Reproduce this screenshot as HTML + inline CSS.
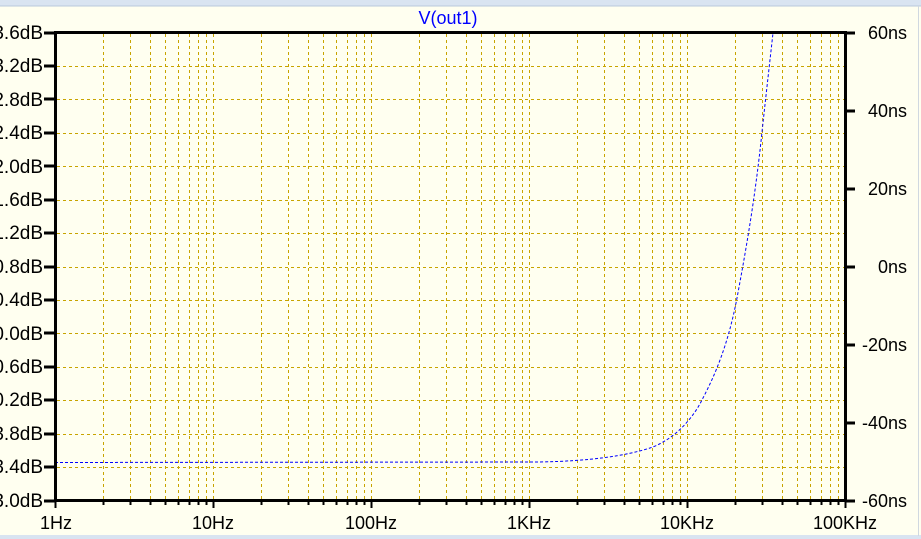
<!DOCTYPE html>
<html><head><meta charset="utf-8"><style>
body{margin:0;width:921px;height:539px;overflow:hidden;background:#fffff0;font-family:"Liberation Sans",Arial,sans-serif}
svg{position:absolute;left:0;top:0}
</style></head><body>
<svg id="s" width="921" height="539" xmlns="http://www.w3.org/2000/svg">
<rect x="0" y="0" width="921" height="6" fill="#d9e4f1"/>
<line x1="0" y1="6" x2="921" y2="6" stroke="#b9c9dc"/>
<rect x="0" y="535" width="921" height="4" fill="#d9e4f1"/>
<line x1="918.5" y1="6" x2="918.5" y2="536" stroke="#d0d8e0"/>
<g id="grid" stroke="#c8a400" stroke-width="1" stroke-dasharray="3,3"></g>
<path fill="none" stroke="#0000ff" stroke-width="1" stroke-dasharray="3,2" d="M55,462.5 L540,462 C590,461 625,456 650,448 C668,442 690,425 703,398 C715,375 728,345 737,298 C745,255 755,200 762,132 C766,95 770,60 773,33"/>
<g id="ax" stroke="#000"></g>
<rect x="55" y="31" width="790" height="3" fill="#000"/>
<rect x="54" y="31" width="3" height="471" fill="#000"/>
<rect x="844" y="31" width="3" height="471" fill="#000"/>
<rect x="54" y="499" width="793" height="3" fill="#000"/>
<text x="448" y="24" fill="#0000ff" font-size="18" text-anchor="middle">V(out1)</text>
<g font-size="19" fill="#000" text-anchor="end">
<text x="43" y="39">3.6dB</text><text x="43" y="72">3.2dB</text><text x="43" y="106">2.8dB</text><text x="43" y="139">2.4dB</text><text x="43" y="173">2.0dB</text><text x="43" y="206">1.6dB</text><text x="43" y="239">1.2dB</text><text x="43" y="273">0.8dB</text><text x="43" y="306">0.4dB</text><text x="43" y="340">0.0dB</text><text x="43" y="373">0.6dB</text><text x="43" y="406">0.2dB</text><text x="43" y="440">3.8dB</text><text x="43" y="473">3.4dB</text><text x="43" y="507">3.0dB</text>
</g>
<g font-size="18" fill="#000" text-anchor="end">
<text x="907" y="39">60ns</text><text x="907" y="117">40ns</text><text x="907" y="195">20ns</text><text x="907" y="273">0ns</text><text x="907" y="351">-20ns</text><text x="907" y="429">-40ns</text><text x="907" y="507">-60ns</text>
</g>
<g font-size="18" fill="#000" text-anchor="middle">
<text x="56" y="529">1Hz</text><text x="213" y="529">10Hz</text><text x="371" y="529">100Hz</text><text x="529" y="529">1KHz</text><text x="687" y="529">10KHz</text><text x="845" y="529">100KHz</text>
</g>
</svg>
<script>
var ns="http://www.w3.org/2000/svg",g=document.getElementById('grid'),ax=document.getElementById('ax');
function L(p,x1,y1,x2,y2,w){var l=document.createElementNS(ns,'line');l.setAttribute('x1',x1);l.setAttribute('y1',y1);l.setAttribute('x2',x2);l.setAttribute('y2',y2);if(w)l.setAttribute('stroke-width',w);p.appendChild(l);}
for(var d=0;d<5;d++){for(var k=1;k<=10;k++){var x=Math.round(55+158*(d+Math.log10(k)))+0.5;if(k==1&&d==0)continue;
if(!(k==10&&d==4))L(g,x,34,x,499);L(ax,x,501,x,k==10?508:505,2);}}
for(var i=1;i<14;i++){var y=Math.round(32.5+33.43*i)+0.5;L(g,57,y,844,y);}
for(var i=0;i<15;i++){var y=Math.round(32.5+33.43*i);L(ax,44,y,55,y,3);}
for(var i=0;i<7;i++){var y=Math.round(32.5+78*i);L(ax,845,y,855,y,3);}
L(ax,55.5,501,55.5,508,2);
</script>
</body></html>
